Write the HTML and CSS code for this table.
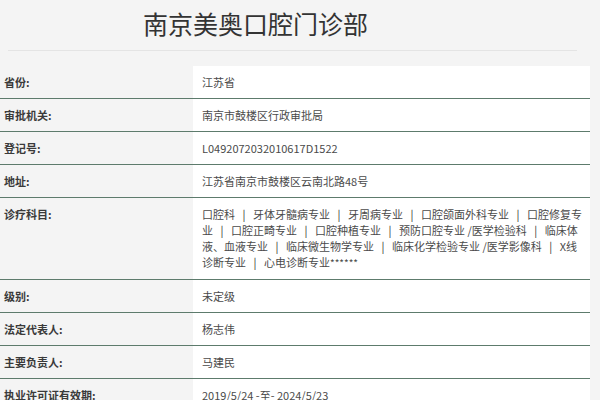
FILE: index.html
```html
<!DOCTYPE html>
<html lang="zh-CN">
<head>
<meta charset="utf-8">
<link rel="stylesheet" href="styles.css">
</head>
<body>
<div class="page">
  <header class="head">
    <h1 class="title">南京美奥口腔门诊部</h1>
  </header>
  <div class="table">
    <div class="row"><div class="label">省份:</div><div class="value">江苏省</div></div>
    <div class="row"><div class="label">审批机关:</div><div class="value">南京市鼓楼区行政审批局</div></div>
    <div class="row"><div class="label">登记号:</div><div class="value">L0492072032010617D1522</div></div>
    <div class="row"><div class="label">地址:</div><div class="value">江苏省南京市鼓楼区云南北路48号</div></div>
    <div class="row"><div class="label">诊疗科目:</div><div class="value">口腔科<span class="sep">|</span>牙体牙髓病专业<span class="sep">|</span>牙周病专业<span class="sep">|</span>口腔颌面外科专业<span class="sep">|</span>口腔修复专业<span class="sep">|</span>口腔正畸专业<span class="sep">|</span>口腔种植专业<span class="sep">|</span>预防口腔专业 /医学检验科<span class="sep">|</span>临床体液、血液专业<span class="sep">|</span>临床微生物学专业<span class="sep">|</span>临床化学检验专业 /医学影像科<span class="sep">|</span>X线诊断专业<span class="sep">|</span>心电诊断专业<span class="stars">******</span></div></div>
    <div class="row"><div class="label">级别:</div><div class="value">未定级</div></div>
    <div class="row"><div class="label">法定代表人:</div><div class="value">杨志伟</div></div>
    <div class="row"><div class="label">主要负责人:</div><div class="value">马建民</div></div>
    <div class="row"><div class="label">执业许可证有效期:</div><div class="value">2019/5/24 -至- 2024/5/23</div></div>
  </div>
</div>
</body>
</html>
```

FILE: styles.css
```css
html, body {
  margin: 0;
  padding: 0;
  background: #f4f4f4;
}
body {
  font-family: "Noto Sans CJK SC", "Noto Sans", sans-serif;
  color: #333;
  font-size: 11px;
}
.page {
  width: 590px;
}
.head {
  margin: 0 13px 0 8px;
  border-bottom: 1px solid #e4e4e4;
  height: 51px;
  box-sizing: border-box;
}
.title {
  margin: 0;
  padding-left: 135px;
  font-size: 25px;
  font-weight: 400;
  line-height: 46px;
  color: #333;
}
.table {
  margin-top: 15px;
}
.row {
  display: grid;
  grid-template-columns: 193px 1fr;
  border-bottom: 1px solid #5d7b6c;
}
.label {
  padding: 8px 4px;
  line-height: 16px;
  font-weight: 700;
  color: #3a3a3a;
  background: #f4f4f4;
}
.value {
  padding: 8px 4px 8px 9px;
  line-height: 16px;
  background: #fff;
  color: #4a4a4a;
}
.sep {
  margin: 0 7.5px;
  color: #333;
}
.stars {
  font-size: 10px;
}
```
